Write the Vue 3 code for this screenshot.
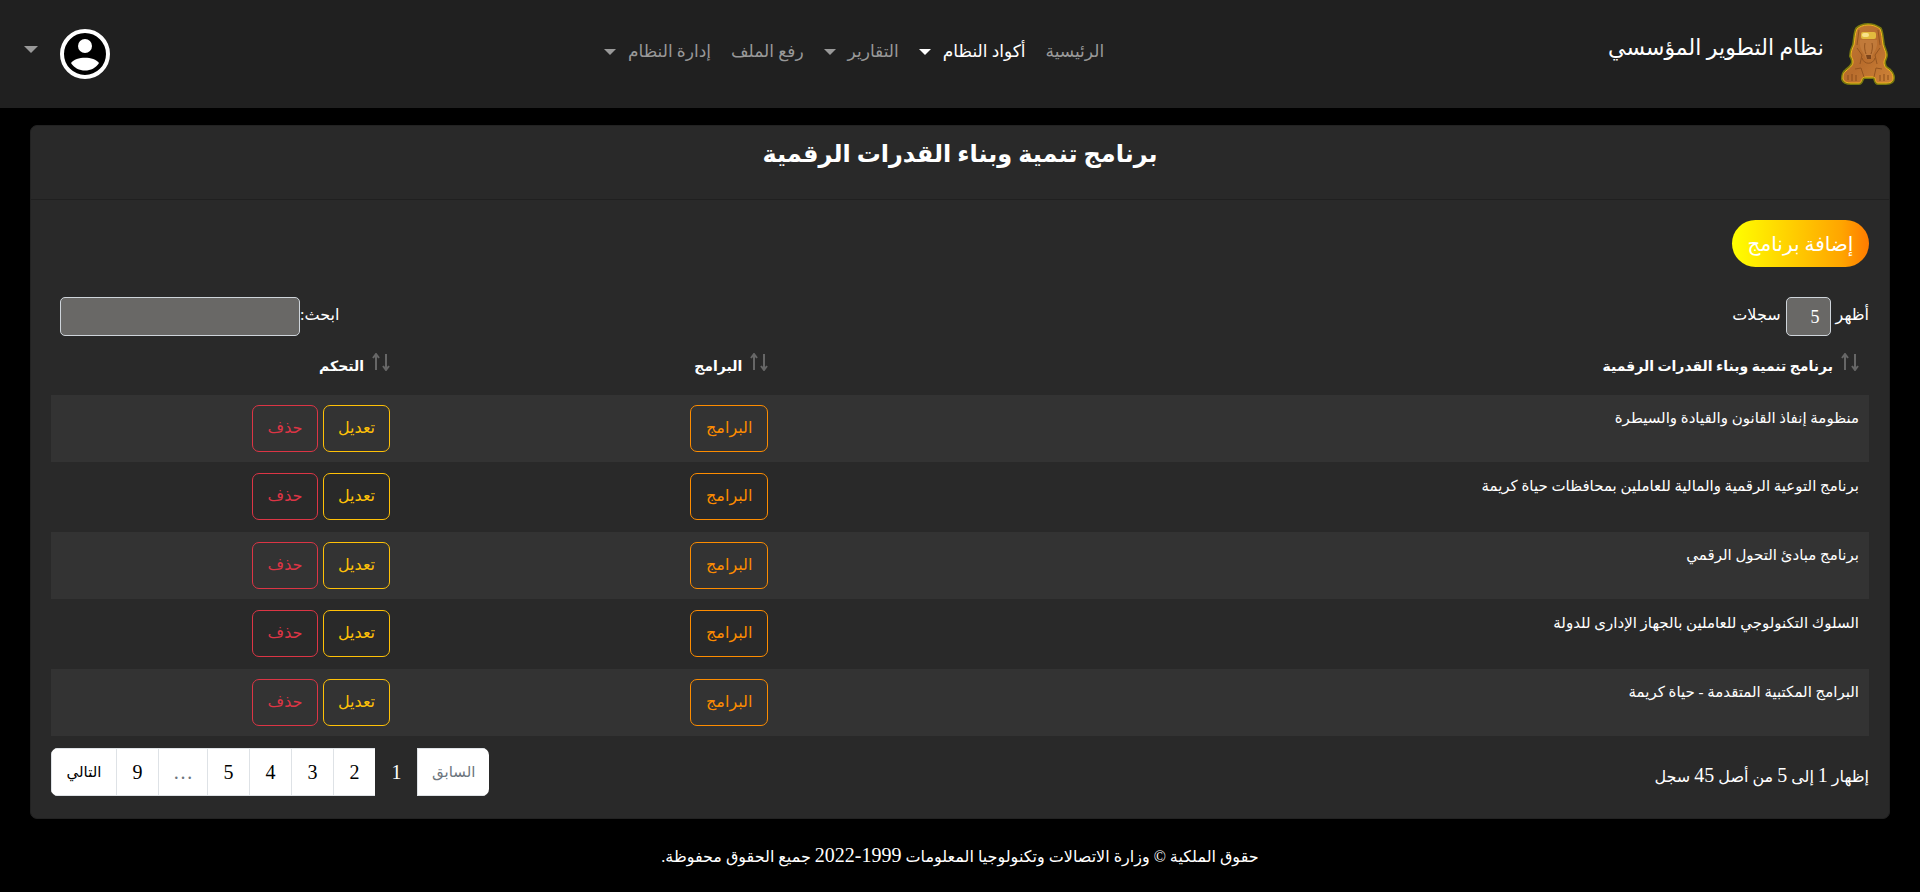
<script setup>
import { ref } from 'vue'

const nav = [
  { label: 'الرئيسية' },
  { label: 'أكواد النظام', menu: true, active: true },
  { label: 'التقارير', menu: true },
  { label: 'رفع الملف' },
  { label: 'إدارة النظام', menu: true },
]

const columns = ['برنامج تنمية وبناء القدرات الرقمية', 'البرامج', 'التحكم']

const programs = [
  'منظومة إنفاذ القانون والقيادة والسيطرة',
  'برنامج التوعية الرقمية والمالية للعاملين بمحافظات حياة كريمة',
  'برنامج مبادئ التحول الرقمي',
  'السلوك التكنولوجي للعاملين بالجهاز الإدارى للدولة',
  'البرامج المكتبية المتقدمة - حياة كريمة',
]

const pages = ['1', '2', '3', '4', '5', '…', '9']
const current = ref('1')
const pageSize = ref('5')
const query = ref('')
</script>

<template>
  <div class="app" dir="rtl" lang="ar">
    <header class="topbar">
      <a class="brand" href="#">
        <svg class="logo" viewBox="0 0 54 62" aria-hidden="true">
          <defs>
            <linearGradient id="stone" x1="0" y1="0" x2="1" y2="1">
              <stop offset="0" stop-color="#c07a35" />
              <stop offset="0.5" stop-color="#b86c2c" />
              <stop offset="1" stop-color="#cf8438" />
            </linearGradient>
            <path id="sphinx" d="M27 2C22 2 18 4 16 6C14 10 14 17 13 22C11 26 10 29 10 33C11 35 12 36 12 39C12 43 8 45 5 48C2 50 2 53 2 56C3 59 6 60 10 60H18C21 60 20 55 23 54H33C35 55 34 60 37 60H45C49 60 52 59 52 55C52 51 50 49 48 47C45 45 43 44 43 39C43 37 45 35 45 32C45 29 43 26 42 22C41 17 41 10 39 6C36 4 33 2 27 2Z" />
          </defs>
          <use href="#sphinx" fill="none" stroke="#77780f" stroke-width="4" />
          <use href="#sphinx" fill="url(#stone)" stroke="#f2b51c" stroke-width="1" />
          <path d="M19 17C18 22 20 27 23 31L25 36H30L32 31C35 27 37 22 36 17Z" fill="#c17a3a" />
          <path d="M18 7L16 22M37 7L39 22M16 25L21 32L19 41M39 25L34 32L36 41M21 35C23 42 32 42 34 35M24 20C23 24 24 28 25 31M31 20C32 24 31 28 30 31" fill="none" stroke="#94541f" stroke-width="1" />
          <rect x="20" y="9" width="15" height="7" rx="2" fill="#e2bb3e" />
          <rect x="21" y="10" width="7" height="4" rx="2" fill="#f8e28a" />
          <path d="M25 32H30V36H26Z" fill="#7d451b" />
          <path d="M23 54L20 45L14 46M33 54L35 45L41 46" fill="none" stroke="#94541f" stroke-width="1" />
          <path d="M7 52V57M11 51V58M15 52V58M39 52V58M43 51V58M47 52V57" stroke="#8a4c1a" stroke-width="1" />
        </svg>
        <span>نظام التطوير المؤسسي</span>
      </a>

      <nav class="nav">
        <a v-for="item in nav" :key="item.label" href="#" class="nav-link" :class="{ active: item.active }">
          {{ item.label }}<i v-if="item.menu" class="caret"></i>
        </a>
      </nav>

      <button class="profile" type="button" aria-label="الحساب">
        <svg class="avatar" viewBox="0 0 50 50" aria-hidden="true">
          <circle cx="25" cy="25" r="23" fill="#000" stroke="#fff" stroke-width="4" />
          <circle cx="25" cy="17" r="7" fill="#fff" />
          <path d="M11 34C16 27 34 27 39 34C33 44 17 44 11 34Z" fill="#fff" />
        </svg>
        <i class="caret"></i>
      </button>
    </header>

    <main class="card">
      <h1 class="title">برنامج تنمية وبناء القدرات الرقمية</h1>
      <div class="body">
        <button class="add" type="button">إضافة برنامج</button>

        <div class="tools">
          <div class="length">
            <label for="size">أظهر</label>
            <select id="size" v-model="pageSize">
              <option>5</option>
              <option>10</option>
              <option>25</option>
            </select>
            <span>سجلات</span>
          </div>
          <div class="search">
            <label for="search">ابحث:</label>
            <input id="search" v-model="query" type="search" />
          </div>
        </div>

        <table>
          <thead>
            <tr>
              <th v-for="c in columns" :key="c" scope="col">
                <svg class="sort" viewBox="0 0 18 18" aria-hidden="true">
                  <path d="M4 17V1M1 5L4 1L7 5M14 1V17M11 13L14 17L17 13" />
                </svg>{{ c }}
              </th>
            </tr>
          </thead>
          <tbody>
            <tr v-for="p in programs" :key="p">
              <td>{{ p }}</td>
              <td><button class="btn orange" type="button">البرامج</button></td>
              <td>
                <div class="actions">
                  <button class="btn yellow" type="button">تعديل</button>
                  <button class="btn red" type="button">حذف</button>
                </div>
              </td>
            </tr>
          </tbody>
        </table>

        <div class="bottom">
          <p class="info">إظهار <b>1</b> إلى <b>5</b> من أصل <b>45</b> سجل</p>
          <div class="pages">
            <button class="prev" type="button" disabled>السابق</button>
            <button
              v-for="p in pages"
              :key="p"
              type="button"
              class="num"
              :class="{ current: p === current, dots: p === '…' }"
              :disabled="p === '…'"
              @click="current = p"
            >{{ p }}</button>
            <button class="next" type="button">التالي</button>
          </div>
        </div>
      </div>
    </main>

    <footer class="footer">حقوق الملكية © وزارة الاتصالات وتكنولوجيا المعلومات <bdi class="years">2022-1999</bdi> جميع الحقوق محفوظة.</footer>
  </div>
</template>

<style>
body {
  background: #000;
}
</style>

<style scoped>
* {
  box-sizing: border-box;
}
.app {
  color: #fff;
  font-family: 'Liberation Serif', 'DejaVu Sans', serif;
  font-size: 16px;
  line-height: 24px;
}
button,
input,
select {
  font: inherit;
  color: inherit;
}
button {
  cursor: pointer;
}
.topbar {
  display: flex;
  justify-content: space-between;
  align-items: center;
  height: 108px;
  padding: 0 24px;
  background: #202020;
}
.brand {
  display: flex;
  align-items: center;
  gap: 16px;
  color: #fff;
  font-size: 22px;
  text-decoration: none;
}
.brand span {
  padding-bottom: 12px;
}
.logo {
  width: 56px;
  height: 62px;
}
.nav {
  display: flex;
  gap: 20px;
  padding: 0 10px 4px 0;
}
.nav-link {
  display: flex;
  align-items: center;
  gap: 12px;
  color: #999;
  font-size: 17px;
  text-decoration: none;
}
.nav-link.active {
  color: #fff;
}
.caret {
  border: 6px solid transparent;
  border-top-color: currentColor;
  border-bottom: 0;
}
.profile {
  display: flex;
  align-items: center;
  gap: 22px;
  padding: 0;
  border: 0;
  background: none;
  color: #999;
}
.profile .caret {
  margin-bottom: 10px;
  border-width: 7px 7px 0;
}
.avatar {
  width: 50px;
  height: 50px;
}
.card {
  margin: 17px 30px 0;
  border: 1px solid #222;
  border-radius: 7px;
  background: #292929;
}
.title {
  margin: 0;
  height: 74px;
  padding-top: 8px;
  border-bottom: 1px solid #202020;
  font-size: 24px;
  line-height: 40px;
  text-align: center;
}
.body {
  padding: 20px 20px 22px;
}
.add {
  display: block;
  height: 47px;
  min-width: 137px;
  padding: 0 15px;
  border: 0;
  border-radius: 24px;
  background: linear-gradient(90deg, #ff0, #ffa500 80%, #ff7b00);
  font-size: 20px;
}
.tools {
  display: flex;
  justify-content: space-between;
  margin-top: 30px;
}
.length,
.search {
  display: flex;
  align-items: center;
  height: 39px;
}
.length {
  gap: 5px;
}
.search {
  margin-left: 9px;
}
.tools label,
.tools span {
  padding-bottom: 4px;
}
.tools select,
.tools input {
  height: 39px;
  border: 1px solid #ced4da;
  border-radius: 5px;
  background: #696866;
}
.tools select {
  appearance: none;
  width: 45px;
  padding: 0 10px;
  font-size: 18px;
}
.tools input {
  width: 240px;
}
table {
  width: 100%;
  border-collapse: separate;
  border-spacing: 0;
  table-layout: fixed;
}
th {
  height: 59px;
  padding: 0 10px;
  font-size: 14px;
  text-align: right;
}
th:nth-child(1) {
  width: 60%;
}
th:nth-child(3) {
  width: 349px;
}
.sort {
  width: 18px;
  height: 18px;
  margin-left: 8px;
  fill: none;
  stroke: #666;
  stroke-width: 2;
}
td {
  height: 69px;
  padding: 10px;
  border-bottom: 1px solid #292929;
  font-size: 15px;
  line-height: 27px;
  vertical-align: top;
}
tbody tr:nth-child(odd) td {
  height: 68px;
  background: #333;
}
.btn {
  display: block;
  height: 47px;
  padding: 0 10px 2px;
  border: 1px solid;
  border-radius: 7px;
  background: none;
  font-size: 16px;
}
.orange {
  min-width: 78px;
  color: #fd8c00;
}
.yellow {
  min-width: 67px;
  color: #ffc107;
}
.red {
  min-width: 66px;
  color: #dc3545;
}
.actions {
  display: flex;
  gap: 5px;
}
.bottom {
  display: flex;
  justify-content: space-between;
  align-items: center;
  margin-top: 11px;
}
.info {
  margin: 0;
  padding-top: 8px;
}
.info b {
  font-size: 20px;
  font-weight: 400;
}
.pages {
  display: flex;
  overflow: hidden;
  border-radius: 7px;
}
.pages button {
  height: 48px;
  padding: 0 14px;
  border: 1px solid #dee2e6;
  border-right-width: 0;
  background: #fff;
  color: #000;
  font-size: 15px;
}
.pages .num {
  min-width: 42px;
  font-size: 20px;
}
.pages .prev,
.pages .dots {
  color: #6c757d;
}
.pages .prev {
  min-width: 71px;
}
.pages .next {
  min-width: 65px;
}
.pages .current {
  border-color: #292929;
  background: #292929;
  color: #fff;
}
.footer {
  padding: 24px 0;
  text-align: center;
}
.years {
  font-size: 20px;
}
</style>
